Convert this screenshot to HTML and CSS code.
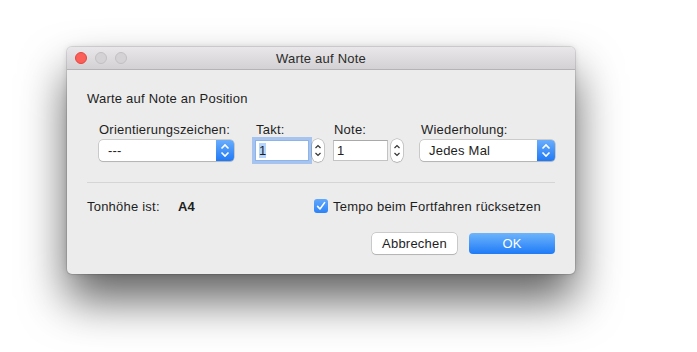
FILE: index.html
```html
<!DOCTYPE html>
<html>
<head>
<meta charset="utf-8">
<link rel="stylesheet" href="styles.css">
</head>
<body>
<div class="window">
  <div class="titlebar">
    <div class="lights"><span class="light red"></span><span class="light gray"></span><span class="light gray"></span></div>
    <div class="title">Warte auf Note</div>
    <div></div>
  </div>
  <div class="content">
    <div class="heading">Warte auf Note an Position</div>
    <div class="fields">
      <div class="col col-orient">
        <div class="label">Orientierungszeichen:</div>
        <div class="popup">
          <span class="popup-text">---</span>
          <span class="popup-arrows"><svg width="18" height="21" viewBox="0 0 18 21"><path d="M5.5 8.5 L9 5 L12.5 8.5 M5.5 12.5 L9 16 L12.5 12.5" fill="none" stroke="#fff" stroke-width="1.6"/></svg></span>
        </div>
      </div>
      <div class="col col-takt">
        <div class="label label-shift">Takt:</div>
        <div class="spin">
          <div class="field focus"><span class="sel">1</span></div>
          <div class="stepper"><svg width="12" height="23" viewBox="0 0 12 23"><path d="M3.5 9 L6 6.5 L8.5 9 M3.5 14 L6 16.5 L8.5 14" fill="none" stroke="#333" stroke-width="1.2"/></svg></div>
        </div>
      </div>
      <div class="col col-note">
        <div class="label label-shift">Note:</div>
        <div class="spin">
          <div class="field">1</div>
          <div class="stepper"><svg width="12" height="23" viewBox="0 0 12 23"><path d="M3.5 9 L6 6.5 L8.5 9 M3.5 14 L6 16.5 L8.5 14" fill="none" stroke="#333" stroke-width="1.2"/></svg></div>
        </div>
      </div>
      <div class="col col-rep">
        <div class="label label-shift">Wiederholung:</div>
        <div class="popup">
          <span class="popup-text">Jedes Mal</span>
          <span class="popup-arrows"><svg width="18" height="21" viewBox="0 0 18 21"><path d="M5.5 8.5 L9 5 L12.5 8.5 M5.5 12.5 L9 16 L12.5 12.5" fill="none" stroke="#fff" stroke-width="1.6"/></svg></span>
        </div>
      </div>
    </div>
    <div class="sep"></div>
    <div class="info">
      <span class="pitch-label">Tonhöhe ist:</span>
      <span class="pitch-value">A4</span>
      <span class="check"><svg width="14" height="14" viewBox="0 0 14 14"><path d="M3.6 7.4 L6 10 L10.6 3.6" fill="none" stroke="#fff" stroke-width="1.6" stroke-linecap="round" stroke-linejoin="round"/></svg></span>
      <span class="check-label">Tempo beim Fortfahren rücksetzen</span>
    </div>
    <div class="buttons">
      <div class="btn btn-cancel">Abbrechen</div>
      <div class="btn btn-ok">OK</div>
    </div>
  </div>
</div>
</body>
</html>
```

FILE: styles.css
```css
html {
  background: #ffffff;
}

body {
  margin: 0;
  min-height: 352px;
  box-sizing: border-box;
  padding: 47px 0 0 67px;
  background: #ffffff;
  font-family: "Liberation Sans", Arial, sans-serif;
  font-size: 13px;
  letter-spacing: 0.22px;
  color: #1e1e1e;
}

.window {
  width: 508px;
  height: 227px;
  box-sizing: border-box;
  background: #ececec;
  border-radius: 5px;
  box-shadow: 0 0 0 1px rgba(0, 0, 0, 0.1), 0 0 6px rgba(0, 0, 0, 0.12), 0 26px 46px rgba(0, 0, 0, 0.62);
  overflow: hidden;
}

.titlebar {
  height: 22px;
  border-bottom: 1px solid #b5b3b5;
  background: linear-gradient(#e9e7e9, #d3d1d3);
  display: grid;
  grid-template-columns: 1fr auto 1fr;
  align-items: center;
}

.lights {
  display: flex;
  gap: 8px;
  padding-left: 8px;
}

.light {
  width: 12px;
  height: 12px;
  border-radius: 50%;
  box-sizing: border-box;
}

.red {
  background: #fc5f57;
  border: 1px solid #e2463f;
}

.gray {
  background: #d4d2d4;
  border: 1px solid #c2c0c2;
}

.title {
  color: #2b2b2b;
}

.content {
  padding: 21px 20px 0;
}

.heading {
  line-height: 16px;
}

.fields {
  display: flex;
  margin-top: 15px;
  padding-left: 12px;
}

.label {
  line-height: 16px;
  margin-bottom: 2px;
}

.label-shift {
  padding-left: 1px;
}

.col-orient { width: 136px; }
.col-takt { margin-left: 21px; }
.col-note { margin-left: 9px; }
.col-rep { margin-left: 17px; width: 136px; }

.popup {
  height: 21px;
  display: flex;
  background: #fff;
  border-radius: 4px;
  box-shadow: 0 0 0 0.5px rgba(0, 0, 0, 0.28), 0 1px 1px rgba(0, 0, 0, 0.12);
}

.popup-text {
  flex: 1;
  padding-left: 9px;
  line-height: 21px;
}

.popup-arrows {
  width: 18px;
  display: flex;
  background: linear-gradient(#69adfb, #2079f6);
  border-radius: 0 4px 4px 0;
}

.spin {
  display: flex;
  align-items: center;
  gap: 3px;
  height: 21px;
}

.field {
  width: 55px;
  height: 21px;
  box-sizing: border-box;
  background: #fff;
  border: 1px solid #c3c3c3;
  border-top-color: #a9a9a9;
  padding-left: 3px;
  line-height: 19px;
}

.field.focus {
  width: 54px;
  border-color: #8db4ea;
  box-shadow: 0 0 0 3px rgba(120, 170, 240, 0.6);
}

.sel {
  background: #b4d6fe;
}

.stepper {
  width: 12px;
  height: 23px;
  box-sizing: border-box;
  background: #fff;
  border-radius: 6px;
  box-shadow: 0 0 0 0.5px rgba(0, 0, 0, 0.3), 0 1px 1px rgba(0, 0, 0, 0.1);
  display: flex;
}

.sep {
  height: 1px;
  background: #d5d5d5;
  margin-top: 21px;
}

.info {
  display: flex;
  align-items: center;
  height: 14px;
  margin-top: 16px;
}

.pitch-label { width: 91px; }

.pitch-value {
  width: 136px;
  font-weight: bold;
}

.check {
  width: 14px;
  height: 14px;
  border-radius: 3px;
  background: linear-gradient(#62a9fb, #2c82f8);
  margin-right: 5px;
  display: flex;
}

.buttons {
  display: flex;
  justify-content: flex-end;
  gap: 12px;
  margin-top: 20px;
}

.btn {
  height: 21px;
  line-height: 21px;
  border-radius: 4px;
  text-align: center;
}

.btn-cancel {
  width: 85px;
  background: #fff;
  box-shadow: 0 0 0 0.5px rgba(0, 0, 0, 0.28), 0 1px 1px rgba(0, 0, 0, 0.12);
}

.btn-ok {
  width: 86px;
  color: #fff;
  background: linear-gradient(#6db4fb, #1f7bf7);
}
```
